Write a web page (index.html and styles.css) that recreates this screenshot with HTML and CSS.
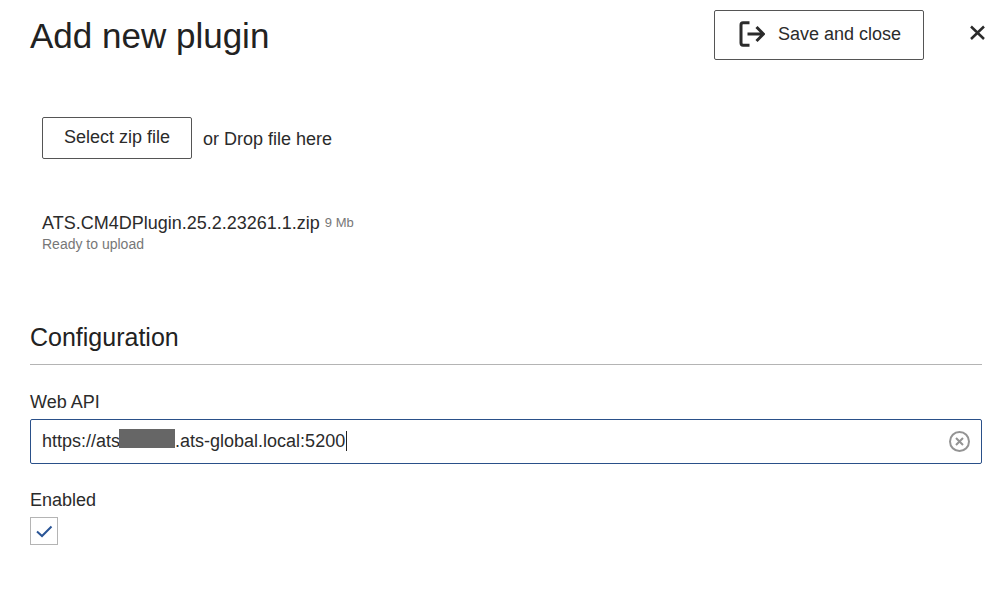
FILE: index.html
```html
<!DOCTYPE html>
<html lang="en">
<head>
<meta charset="utf-8">
<meta name="viewport" content="width=device-width, initial-scale=1">
<title>Add new plugin</title>
<link rel="stylesheet" href="styles.css">
</head>
<body>
<form class="dialog">
  <header class="dialog-header">
    <h1 class="dialog-title">Add new plugin</h1>
    <button class="btn btn-save" type="button">
      <svg class="icon-exit" viewBox="0 0 28 26" width="28" height="26" aria-hidden="true">
        <path d="M12.500 1.800H6Q4 1.800 4 4V22Q4 24.200 6 24.200H12.500M10.500 13H27M19.500 6L26.500 13L19.500 20"/>
      </svg>
      <span>Save and close</span>
    </button>
    <button class="btn-close" type="button" aria-label="Close">
      <svg class="icon-close" viewBox="0 0 16 16" width="16" height="16" aria-hidden="true">
        <path d="M1 1.500L14 14M14 1.500L1 14"/>
      </svg>
    </button>
  </header>
  <section class="upload">
    <div class="drop-row">
      <button class="btn btn-select" type="button">Select zip file</button>
      <span class="drop-hint">or Drop file here</span>
    </div>
    <div class="file">
      <div class="file-line"><span>ATS.CM4DPlugin.25.2.23261.1.zip</span><span class="file-size">9 Mb</span></div>
      <div class="file-status">Ready to upload</div>
    </div>
  </section>
  <section class="config">
    <h2 class="config-title">Configuration</h2>
    <label class="label" for="web-api">Web API</label>
    <div class="field">
      <input class="field-input" id="web-api" type="text" value="https://ats&nbsp;&nbsp;&nbsp;&nbsp;&nbsp;&nbsp;&nbsp;&nbsp;&nbsp;&nbsp;&nbsp;.ats-global.local:5200">
      <span class="mask"></span>
      <span class="caret"></span>
      <button class="btn-clear" type="button" aria-label="Clear">
        <svg class="icon-clear" viewBox="0 0 22 22" width="22" height="22" aria-hidden="true">
          <circle cx="11.500" cy="10.500" r="9.500"/>
          <path d="M8 7L15 14M15 7L8 14"/>
        </svg>
      </button>
    </div>
    <label class="label label-enabled" for="enabled">Enabled</label>
    <div class="check">
      <input class="check-input" id="enabled" type="checkbox" checked>
      <svg class="icon-check" viewBox="0 0 28 28" width="28" height="28" aria-hidden="true">
        <path d="M7 14.500L12 19L21.500 9.500"/>
      </svg>
    </div>
  </section>
</form>
</body>
</html>
```
FILE: styles.css
```css
* {
  box-sizing: border-box;
}

body {
  margin: 0;
  background: #fff;
  color: #2b2b2b;
  font: 18px/22px "Liberation Sans", Arial, sans-serif;
}

button,
input {
  margin: 0;
  color: inherit;
  font: inherit;
}

svg {
  display: block;
  fill: none;
  stroke: currentColor;
}

.dialog {
  padding: 10px 18px 30px 30px;
}

.dialog-header {
  display: flex;
  align-items: flex-start;
}

.dialog-title {
  flex: 1;
  margin: 6px 0 0;
  color: #222;
  font-size: 35px;
  font-weight: 400;
  line-height: 40px;
}

.btn {
  border: 1px solid #555;
  border-radius: 2px;
  background: #fff;
}

.btn-save {
  display: flex;
  align-items: center;
  gap: 13px;
  height: 50px;
  padding: 0 22px 2px;
}

.icon-exit {
  stroke-width: 3;
}

.btn-close {
  margin: 15px -4px 0 46px;
  padding: 0;
  border: 0;
  background: none;
}

.icon-close {
  stroke-width: 2.5;
}

.upload {
  padding: 57px 12px 0;
}

.drop-row {
  display: flex;
  align-items: center;
  gap: 11px;
}

.drop-hint {
  padding-top: 2px;
}

.btn-select {
  height: 42px;
  padding: 0 21px 2px;
}

.file {
  margin-top: 53px;
}

.file-line {
  display: flex;
  align-items: center;
  gap: 5px;
}

.file-size {
  color: #777;
  font-size: 13px;
}

.file-status {
  color: #777;
  font-size: 14px;
  line-height: 20px;
}

.config {
  margin-top: 68px;
}

.config-title {
  margin: 0 0 26px;
  padding-bottom: 12px;
  border-bottom: 1px solid #b4b4b4;
  color: #222;
  font-size: 25px;
  font-weight: 400;
  line-height: 30px;
}

.label {
  display: block;
}

.field {
  position: relative;
  display: flex;
  align-items: center;
  height: 45px;
  margin-top: 6px;
  padding: 0 11px;
  border: 1px solid #2a5089;
  border-radius: 2px;
}

.field-input {
  flex: 1;
  padding: 0 0 2px;
  border: 0;
  outline: 0;
  background: none;
}

.mask {
  position: absolute;
  top: 9px;
  left: 88px;
  width: 56px;
  height: 19px;
  background: #666;
}

.caret {
  position: absolute;
  top: 11px;
  left: 315px;
  width: 1px;
  height: 20px;
  background: #222;
}

.btn-clear {
  padding: 0;
  border: 0;
  background: none;
  color: #949494;
}

.icon-clear {
  stroke-width: 2;
}

.label-enabled {
  margin-top: 25px;
}

.check {
  position: relative;
  width: 28px;
  height: 28px;
  margin-top: 6px;
}

.check-input {
  display: block;
  width: 28px;
  height: 28px;
  border: 1px solid #b4b4b4;
  background: #fff;
  appearance: none;
}

.icon-check {
  position: absolute;
  top: 0;
  left: 0;
  color: #2a5596;
  stroke-width: 2;
  pointer-events: none;
}
```
